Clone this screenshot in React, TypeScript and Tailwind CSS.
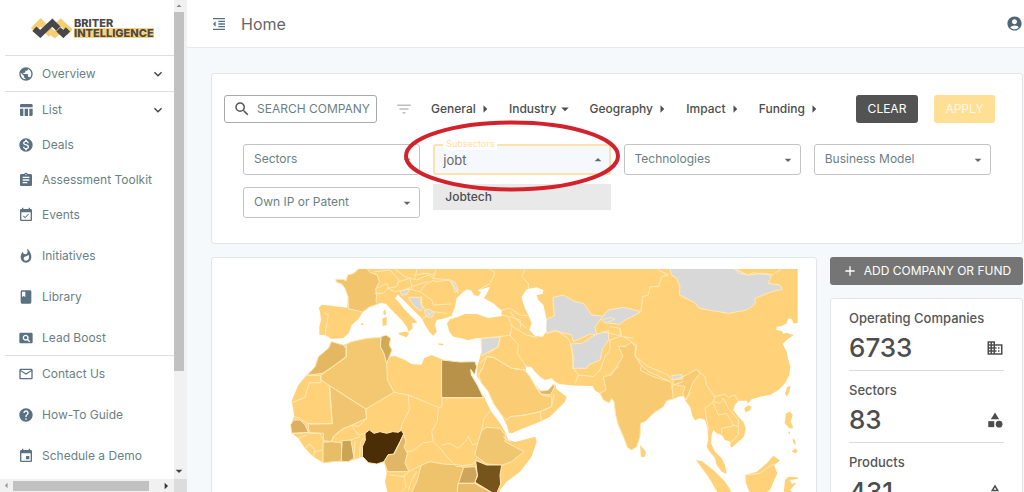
import type { ReactNode } from "react";
import type { IconType } from "react-icons";
import {
  MdAccountCircle,
  MdAdd,
  MdArrowDropDown,
  MdArrowDropUp,
  MdArrowRight,
  MdAssignment,
  MdBook,
  MdBusiness,
  MdCategory,
  MdEvent,
  MdEventAvailable,
  MdExpandMore,
  MdFilterList,
  MdFormatIndentDecrease,
  MdHelp,
  MdMailOutline,
  MdMonetizationOn,
  MdOutlineCategory,
  MdPageview,
  MdPublic,
  MdSearch,
  MdTableChart,
  MdWhatshot,
} from "react-icons/md";

function Logo() {
  return (
    <a href="#home" className="flex h-[55px] items-center gap-[2px] pl-[30px]" aria-label="Briter Intelligence">
      <svg viewBox="0 0 124 60" className="h-5 w-[42px] shrink-0" aria-hidden="true">
        <g fill="none" strokeWidth="18" strokeLinejoin="miter">
          <path d="M8 36 L31 13 L45 27" stroke="#f6cf72" />
          <path d="M49 50 L60 39 L73 50 L88 37" stroke="#f6cf72" />
          <path d="M78 25 L91 13 L115 35 L104 46" stroke="#f6cf72" />
          <path d="M12 32 L30 48 L66 14 L84 32" stroke="#47474b" />
          <path d="M84 34 L99 48 L113 34" stroke="#47474b" />
        </g>
      </svg>
      <span className="flex flex-col items-start text-[11px] leading-[10px] font-extrabold text-[#4a4a4a]">
        <span>BRITER</span>
        <span className="bg-[#fbd27b]">INTELLIGENCE</span>
      </span>
    </a>
  );
}

function NavItem({ icon: Icon, label, expandable }: { icon: IconType; label: string; expandable?: boolean }) {
  return (
    <a href="#nav" className="flex h-[35px] shrink-0 items-center pr-2 pl-[18px] text-xs text-[#6a7f85]">
      <Icon className="mr-2 size-4 text-[#5a7182]" />
      <span className="grow whitespace-nowrap">{label}</span>
      {expandable && <MdExpandMore className="size-4 text-[#444]" />}
    </a>
  );
}

function Group({ children }: { children: ReactNode }) {
  return <div className="ml-[5px] border-t border-[#dcdfe1] [&>a]:-ml-[5px]">{children}</div>;
}

function Sidebar() {
  return (
    <aside className="flex w-[187px] shrink-0 flex-col bg-white">
      <div className="flex min-h-0 grow">
        <nav className="flex min-w-0 grow flex-col overflow-hidden">
          <Logo />
          <Group>
            <NavItem icon={MdPublic} label="Overview" expandable />
          </Group>
          <Group>
            <NavItem icon={MdTableChart} label="List" expandable />
            <NavItem icon={MdMonetizationOn} label="Deals" />
            <NavItem icon={MdAssignment} label="Assessment Toolkit" />
            <NavItem icon={MdEventAvailable} label="Events" />
            <div className="mt-[6px] -ml-[5px] flex flex-col gap-[6px]">
              <NavItem icon={MdWhatshot} label="Initiatives" />
              <NavItem icon={MdBook} label="Library" />
              <NavItem icon={MdPageview} label="Lead Boost" />
            </div>
          </Group>
          <Group>
            <div className="-ml-[5px] flex flex-col gap-[6px]">
              <NavItem icon={MdMailOutline} label="Contact Us" />
              <NavItem icon={MdHelp} label="How-To Guide" />
              <NavItem icon={MdEvent} label="Schedule a Demo" />
            </div>
          </Group>
        </nav>
        <div className="flex w-[13px] shrink-0 flex-col items-center bg-[#f1f1f1] pr-[3px]">
          <MdArrowDropUp className="h-3 w-4 shrink-0 text-[#8a8a8a]" />
          <div className="h-3/4 w-[10px] bg-[#c1c1c1]" />
          <MdArrowDropDown className="mt-auto h-4 w-4 shrink-0 text-[#444]" />
        </div>
      </div>
      <div className="flex h-[13px] shrink-0 items-center bg-[#f1f1f1]">
        <MdArrowRight className="size-[13px] shrink-0 rotate-180 text-[#999]" />
        <div className="h-[10px] w-[136px] bg-[#c1c1c1]" />
        <MdArrowRight className="ml-auto size-4 text-[#333]" />
        <div className="h-full w-[13px] bg-[#dcdcdc]" />
      </div>
    </aside>
  );
}

function Tab({ label, open }: { label: string; open?: boolean }) {
  return (
    <button type="button" className="flex items-center text-xs font-medium text-[#4d4d4d]" aria-expanded={!!open}>
      {label}
      {open ? <MdArrowDropDown className="size-[18px]" /> : <MdArrowRight className="size-[18px]" />}
    </button>
  );
}

function SelectBox({ label }: { label: string }) {
  return (
    <div className="relative">
      <select
        aria-label={label}
        className="h-[31px] w-full appearance-none rounded-[3px] border border-[#c4c4c4] bg-white pr-6 pb-[2px] pl-[10px] text-xs text-[#6a7f85]"
      >
        <option>{label}</option>
      </select>
      <MdArrowDropDown className="pointer-events-none absolute top-2 right-[5px] size-4 text-[#666]" />
    </div>
  );
}

function Subsectors() {
  return (
    <div className="relative">
      <label
        htmlFor="subsectors"
        className="absolute -top-[6px] left-[10px] z-10 bg-white px-[3px] text-[9px] leading-3 text-[#ffe0a0]"
      >
        Subsectors
      </label>
      <input
        id="subsectors"
        role="combobox"
        aria-expanded="true"
        aria-controls="subsector-options"
        defaultValue="jobt"
        className="h-[31px] w-full rounded-[3px] border-2 border-[#fbe3ab] bg-[#f5f9fd] px-2 text-[13px] text-[#666] outline-none"
      />
      <MdArrowDropUp className="pointer-events-none absolute top-2 right-[5px] size-4 text-[#666]" />
      <ul
        id="subsector-options"
        role="listbox"
        className="absolute top-10 left-0 z-10 w-full bg-[#e9e9e9] text-xs leading-[26px] font-medium text-[#4d4d4d]"
      >
        <li role="option" aria-selected="true" className="px-3">
          Jobtech
        </li>
      </ul>
      <svg
        viewBox="0 0 218 74"
        className="pointer-events-none absolute -top-[26px] -left-[30px] z-20 h-[74px] w-[218px] max-w-none"
        aria-hidden="true"
      >
        <ellipse cx="109" cy="38" rx="106" ry="33.5" fill="none" stroke="#d2232d" strokeWidth="4" />
      </svg>
    </div>
  );
}

function Filters() {
  return (
    <section className="min-h-[171px] rounded-[3px] border border-[#e1e5e9] bg-white pt-[21px]">
      <div className="flex items-center pr-[27px] pl-3">
        <button
          type="button"
          className="flex h-7 w-[153px] items-center gap-[6px] rounded-[3px] border border-[#a9a9a9] pl-2 text-xs whitespace-nowrap text-[#6a7f85]"
        >
          <MdSearch className="size-[18px] text-[#555]" />
          SEARCH COMPANY
        </button>
        <MdFilterList className="mx-[18px] size-[18px] shrink-0 text-[#bdbdbd]" />
        <div className="flex w-[392px] items-center justify-between">
          <Tab label="General" />
          <Tab label="Industry" open />
          <Tab label="Geography" />
          <Tab label="Impact" />
          <Tab label="Funding" />
        </div>
        <div className="ml-auto flex gap-4">
          <button type="button" className="h-7 w-[62px] rounded-[3px] bg-[#535353] text-xs text-white">
            CLEAR
          </button>
          <button type="button" className="h-7 w-[61px] rounded-[3px] bg-[#ffdf94] text-xs text-[#fff8e8]">
            APPLY
          </button>
        </div>
      </div>
      <div className="mt-[21px] grid grid-cols-4 gap-x-[13px] gap-y-3 pr-[31px] pl-[31px]">
        <SelectBox label="Sectors" />
        <Subsectors />
        <SelectBox label="Technologies" />
        <SelectBox label="Business Model" />
        <SelectBox label="Own IP or Patent" />
      </div>
    </section>
  );
}

const EURASIA =
  "M168 58L190 58 198 63 203 45 222 40 232 30 240 20H1553V190L1540 190 1535 177 1525 175 1520 190 1505 198 1490 200 1488 210 1505 212 1510 222 1518 218 1530 222 1541 225 1520 240 1508 252 1520 275 1525 300 1531 320 1528 345 1515 370 1495 390 1470 405 1440 410 1415 418 1405 430 1400 422 1375 422 1365 435 1360 450 1375 470 1390 485 1397 505 1392 530 1375 545 1355 563 1350 556 1352 545 1335 540 1325 525 1310 520 1300 510 1295 525 1293 550 1305 575 1325 595 1335 615 1340 642 1325 635 1310 615 1305 595 1285 570 1280 560 1285 535 1282 505 1275 480 1260 475 1245 481 1238 470 1230 440 1218 425 1210 408 1195 410 1180 417 1160 422 1150 440 1120 460 1095 485 1082 490 1080 530 1070 560 1055 570 1042 562 1030 530 1015 495 1007 465 1002 425 995 415 988 429 970 420 960 400 945 392 938 378 900 377 870 376 838 372 825 365 815 355 795 360 780 350 765 335 755 322 737 318 738 335 750 350 760 370 770 386 785 394 805 390 818 377 826 372 829 387 860 410 855 425 830 450 810 470 780 485 730 505 695 520 687 518 680 495 665 465 640 430 625 395 605 370 590 348 592 320 600 292 605 270 604 235 590 234 565 241 545 235 520 230 508 215 501 190 510 178 530 172 520 165 495 175 470 180 465 195 470 215 460 228 448 215 435 195 425 175 400 150 385 135 362 112 354 104 345 115 355 125 375 150 400 175 412 188 396 190 398 205 386 215 380 200 365 180 340 155 318 132 305 128 285 135 265 142 248 157 235 178 215 195 207 218 190 234 155 237 137 226 118 224 118 200 123 180 120 155 116 143 126 134 160 138 202 143 204 110 195 85 185 72 170 67Z";

const AFRICA =
  "M155 245L190 255 215 245 260 235 300 232 318 225 332 235 328 255 336 270 328 290 345 288 375 300 395 312 425 314 432 295 455 285 490 300 540 306 585 305 590 320 584 344 572 328 574 345 592 375 612 410 632 452 660 490 675 515 685 540 705 546 740 537 766 530 770 545 755 590 720 635 680 665 660 690 655 730H330L315 665 320 640 312 605 290 612 265 608 248 590 220 600 190 605 160 605 130 609 100 590 75 565 55 535 35 520 32 495 42 470 40 450 35 425 40 410 55 375 80 345 105 320 115 290 145 265Z";

const SHADED: { fill: string; d: string }[] = [
  { fill: "#f2c46c", d: "M168 58L190 58 198 63 203 45 222 40 232 30 240 22H258L270 37 292 45 298 66 287 86 290 105 288 126 295 132 270 140 248 156 205 146 204 110 195 85 185 72 170 67Z" },
  { fill: "#f3c870", d: "M200 252L215 245 260 235 303 232 302 262 312 280 320 310 322 360 342 397 257 447 150 378 122 358 124 345 165 315 198 292Z" },
  { fill: "#e4b863", d: "M155 245L190 255 198 265 198 290 165 315 128 340 82 346 105 320 115 290 145 265Z" },
  { fill: "#d3a955", d: "M304 230L318 225 332 235 328 255 336 270 328 290 320 310 312 280 302 262Z" },
  { fill: "#f1c56f", d: "M150 378L257 447 260 475 215 495 180 512 160 530 155 545 132 542 120 520 88 520 84 492 156 491Z" },
  { fill: "#dcb05e", d: "M42 480L60 480 75 494 85 517 50 520 35 520 32 495Z" },
  { fill: "#e8bd68", d: "M130 547L155 545 184 548 186 604 160 605 130 609Z" },
  { fill: "#cca453", d: "M187 542L213 540 222 595 205 605 185 604Z" },
  { fill: "#4b2e05", d: "M248 558L256 540 255 520 268 510 282 520 300 515 320 520 338 515 355 517 364 511 371 522 360 545 348 568 340 584 325 584 312 605 290 612 265 608 248 590Z" },
  { fill: "#e0b766", d: "M371 524L378 545 372 560 382 580 375 610 387 635H323L312 605 325 584 342 582 356 555Z" },
  { fill: "#b9924a", d: "M486 300L540 306 585 305 590 320 584 344 572 328 574 345 592 375 610 413H486Z" },
  { fill: "#f0c670", d: "M605 512L620 502 660 505 676 525 675 545 732 575 695 605 665 616 620 612 584 585 592 555Z" },
  { fill: "#76541b", d: "M588 602L620 615 665 615 660 645 662 672 648 705 584 666 592 650Z" },
  { fill: "#cda65a", d: "M550 622L586 620 592 645 584 670H535Z" },
  { fill: "#efc26c", d: "M425 615L450 605 490 612 540 615 550 625 535 670 540 720H385L410 665Z" },
  { fill: "#e9bd68", d: "M535 670H584L630 695 640 730H530Z" },
  { fill: "#facd75", d: "M596 345L610 320 620 290 640 292 695 325 732 330 750 350 770 386 785 405 815 410 815 440 780 455 735 465 690 470 680 480 665 465 640 430 625 395 605 370Z" },
  { fill: "#dfb565", d: "M770 378L782 393 805 390 820 372 824 380 812 404 784 402Z" },
  { fill: "#f8cb73", d: "M1017 258L1035 260 1055 247 1066 260 1065 285 1083 315 1105 335 1165 362 1175 370 1180 417 1160 422 1150 440 1120 460 1095 485 1082 490 1080 530 1070 560 1055 570 1042 562 1030 530 1015 495 1007 465 1002 425 995 415 988 429 970 420 960 400 978 390 970 350 995 345 1010 320 1028 290Z" },
  { fill: "#f8cb73", d: "M1210 350L1250 328 1260 340 1240 365 1230 390 1218 420 1208 402 1215 380 1178 372 1180 362Z" },
];

const GREY = [
  "M1170 27L1175 45 1190 55 1200 80 1198 105 1245 128 1258 145 1345 160 1400 150 1425 132 1425 115 1475 95 1507 88 1500 75 1465 70 1475 45 1455 40 1405 45 1350 22 1200 20Z",
  "M820 112L850 105 885 125 910 130 935 165 985 170 965 175 945 200 950 225 930 222 880 245 875 225 825 212 800 220 795 180 822 168Z",
  "M872 252L905 250 945 225 985 212 986 240 968 265 960 300 925 315 920 325 878 325 882 295Z",
  "M964 175L985 150 1030 142 1083 155 1060 168 1035 180 1020 193 975 188Z",
  "M604 235L660 230 655 260 625 275 607 288Z",
  "M510 60L525 67 535 90 525 98 520 80Z",
  "M362 93L388 87 382 102 366 106Z",
  "M386 112L420 112 422 130 428 145 422 153 400 135Z",
  "M434 151L447 147 463 158 456 172 440 170Z",
  "M1176 346L1206 344 1208 357 1180 359Z",
];

const SEAS = [
  "M515 165L525 140 530 115 545 100 560 88 575 92 582 106 595 108 603 98 592 90 610 86 630 80 622 98 612 115 640 130 665 152 665 168 625 174 590 162 555 162 530 172Z",
  "M725 110L740 88 770 82 790 90 788 102 770 105 775 120 790 135 795 155 800 180 798 215 788 230 765 228 748 210 755 190 745 165 735 145 728 125Z",
];

const BORDERS = [
  "M134 158L145 165 140 195 135 225",
  "M285 35L330 30 357 60 350 80 325 85 320 70 290 85 M325 85L345 95 388 87 M285 100L310 100 325 82",
  "M345 27L375 50 410 60 445 45 460 55 470 20 M357 65L390 55 395 80 375 90 M388 87L420 95 440 70 465 60 M395 80L440 65 M420 95L455 120 460 135 515 132 M425 110L425 135 450 165 M428 175L460 155 500 160 M410 30L405 55 M460 45L440 40 400 45",
  "M465 65L510 60 535 98 M460 55L510 60",
  "M630 27L645 40 630 70 600 88 M735 27L725 50 745 70 745 88",
  "M665 150L690 145 720 165 745 168 M690 155L705 175 740 205 M665 165L685 170 695 195 M690 170L720 180 722 200",
  "M604 235L660 230 690 225 697 195 M690 225L715 255 712 280 738 318 M660 230L655 260 625 280 M600 310L620 290 640 292 695 325 735 330",
  "M690 195L740 225 770 232 M800 220L830 212 865 235 875 260 880 325 895 345 885 370",
  "M895 345L940 350 960 330 975 290 990 270 990 240 1025 228 1020 205 990 200 M985 345L1015 320",
  "M968 215L1000 222 1030 230 1055 245 M1020 205V228L1060 235",
  "M1083 155L1088 110 1105 105 1110 80 1135 80 1145 50 1165 45 1135 30",
  "M1055 247L1070 255 1065 290 1105 320 1165 345 1175 360 1210 350 M1085 315L1080 330 1120 350 1170 365",
  "M1250 328L1275 350 1280 375 1290 390 1305 410 1335 402 1345 412 1365 405 1372 420",
  "M1305 410L1300 425 1275 445 1285 510 M1300 425L1320 430 1330 415 1345 445 1375 480 1375 500 M1300 430L1315 465 1340 460 1360 495 1375 500 1375 525 1355 545 M1325 520L1325 505 1360 498",
  "M1208 365L1180 375 1175 385 M1218 420L1230 400",
  "M1365 20L1375 40 1405 45 1420 38 1450 42 1475 45 1500 30",
  "M82 346H122V368H88L80 395 75 412 38 427",
  "M148 380L156 491H84L60 475 42 470 M35 520L85 518 130 520 130 547 M75 565L90 552 105 570 100 590 M105 575L128 570 M55 535L80 525",
  "M257 447L260 475 235 500 220 495 190 505 160 530 155 545 M215 497L235 525 255 520 M213 540L240 530 M222 595L225 545 M238 590L242 545 250 535",
  "M342 397L385 405 388 450 365 495 362 511 M385 405L475 442 486 440V413 M475 442L472 485 455 515 460 545 430 548 400 572 380 575",
  "M486 413H612 M460 545L485 570 500 590 530 620 580 612 588 598 M485 555L510 550 535 565 560 540 565 528 578 555 590 550 M632 450L612 475 605 512",
  "M387 635L372 650 330 645 M372 645L378 680 350 710 M410 635L395 660 385 690 M387 635L425 615",
  "M670 530L690 545",
  "M680 480L690 470 735 465 780 455 785 485 M780 455L815 440 822 405",
];

const ISLANDS = [
  "M354 219L375 215 388 218 380 232 360 225Z",
  "M307 175L320 170 320 195 308 198Z",
  "M310 153L317 148 317 165 311 165Z",
  "M475 250L492 252 488 256 476 254Z",
  "M243 190H250V195H243Z",
  "M1080 555L1098 575 1095 590 1083 592Z",
  "M1515 400L1522 380 1532 378 1528 395 1520 410Z",
  "M1393 445L1405 436 1415 440 1408 453 1395 456Z",
  "M1518 460L1530 455 1538 465 1532 485 1540 505 1528 505 1514 490Z",
  "M1522 515L1530 515 1530 523Z M1538 535L1545 540 1547 555 1540 550Z M1535 575L1545 565 1553 572 1548 580Z",
  "M1248 600L1265 603 1300 630 1335 665 1352 690 1350 730 1320 710 1285 650Z",
  "M1396 645L1430 635 1460 610 1480 587 1500 602 1482 615 1492 640 1470 690 1455 700H1410L1398 670Z",
  "M1508 730L1515 660 1525 650 1553 652V657L1530 660 1535 672 1550 668 1530 690 1540 700V730Z",
];

function WorldMap() {
  return (
    <svg viewBox="-168 27 1722 669" className="w-full" role="img" aria-label="Companies by country">
      <g fill="#ffd27a">
        <path d={EURASIA} />
        <path d={AFRICA} />
        {ISLANDS.map((d) => (
          <path key={d} d={d} />
        ))}
      </g>
      <g stroke="#ffeab8" strokeWidth="3" strokeLinejoin="round" strokeLinecap="round">
        {SHADED.map((s) => (
          <path key={s.d} d={s.d} fill={s.fill} />
        ))}
        {GREY.map((d) => (
          <path key={d} d={d} fill="#d8d8d8" />
        ))}
        {BORDERS.map((d) => (
          <path key={d} d={d} fill="none" />
        ))}
        <path d="M1396 645L1440 640 1460 625 1482 612" fill="none" />
        <path d="M970 178L990 172 1005 178 985 186" fill="none" />
      </g>
      {SEAS.map((d) => (
        <path key={d} d={d} fill="#fff" />
      ))}
    </svg>
  );
}

function Stat({ label, value, icon: Icon }: { label: string; value: string; icon: IconType }) {
  return (
    <div className="flex h-[72px] flex-col border-b border-[#dcdcdc] pt-[11px]">
      <span className="text-[13px] leading-4 font-medium text-[#555]">{label}</span>
      <div className="flex items-center justify-between pt-[6px] text-[#4d4d4d]">
        <span className="text-[26px] leading-8 font-medium">{value}</span>
        <Icon className="size-[18px]" />
      </div>
    </div>
  );
}

export default function App() {
  return (
    <div className="flex h-screen overflow-hidden bg-[#f5f9fc] font-['Inter','Open_Sans',sans-serif]">
      <Sidebar />
      <div className="flex min-w-0 grow flex-col">
        <header className="flex h-12 shrink-0 items-center border-b border-[#e6eaed] bg-white pr-px pl-6">
          <button type="button" aria-label="Collapse menu">
            <MdFormatIndentDecrease className="size-4 text-[#5a7182]" />
          </button>
          <h1 className="pl-[14px] text-base text-[#666]">Home</h1>
          <button type="button" aria-label="Account" className="ml-auto">
            <MdAccountCircle className="size-[17px] text-[#4f6676]" />
          </button>
        </header>
        <main className="flex min-h-0 grow flex-col gap-[13px] overflow-hidden pt-[25px] pr-px pl-6">
          <Filters />
          <div className="flex items-start gap-[13px]">
            <section className="min-h-[300px] min-w-0 grow rounded-[3px] border border-[#e1e5e9] bg-white pt-[11px] pr-[18px] pl-3">
              <WorldMap />
            </section>
            <div className="flex w-[193px] shrink-0 flex-col gap-[13px]">
              <button
                type="button"
                className="flex h-7 items-center justify-center gap-[6px] rounded-[3px] bg-[#757575] text-xs whitespace-nowrap text-white"
              >
                <MdAdd className="size-4 shrink-0" />
                ADD COMPANY OR FUND
              </button>
              <section className="rounded-[3px] border border-[#e1e5e9] bg-white px-[18px]">
                <Stat label="Operating Companies" value="6733" icon={MdBusiness} />
                <Stat label="Sectors" value="83" icon={MdCategory} />
                <Stat label="Products" value="431" icon={MdOutlineCategory} />
              </section>
            </div>
          </div>
        </main>
      </div>
    </div>
  );
}
